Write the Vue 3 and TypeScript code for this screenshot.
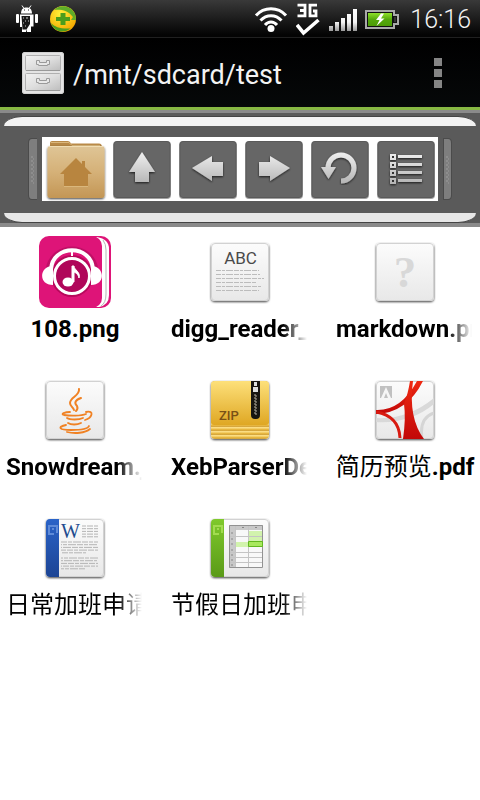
<script setup lang="ts">
type Tool = { id: string; label: string }
type FileEntry = { kind: string; name: string; long: boolean }
type Part = { text: string; cjk: boolean }

const path = '/mnt/sdcard/test'

const tools: Tool[] = [
  { id: 'home', label: 'Home' },
  { id: 'up', label: 'Up' },
  { id: 'back', label: 'Back' },
  { id: 'forward', label: 'Forward' },
  { id: 'refresh', label: 'Refresh' },
  { id: 'list', label: 'List' },
]

const files: FileEntry[] = [
  { kind: 'music', name: '108.png', long: false },
  { kind: 'text', name: 'digg_reader_', long: true },
  { kind: 'unknown', name: 'markdown.pn', long: true },
  { kind: 'java', name: 'Snowdream.j', long: true },
  { kind: 'zip', name: 'XebParserDe', long: true },
  { kind: 'pdf', name: '简历预览.pdf', long: false },
  { kind: 'word', name: '日常加班申请', long: true },
  { kind: 'sheet', name: '节假日加班申', long: true },
]

// Latin runs are bold, Chinese runs keep the regular weight
function parts(name: string): Part[] {
  return (name.match(/[\u4e00-\u9fff]+|[^\u4e00-\u9fff]+/g) ?? []).map((text) => ({
    text,
    cjk: /[\u4e00-\u9fff]/.test(text),
  }))
}

const rows4 = [0, 1, 2, 3]
const textRows = [34.5, 38.5, 42.5, 46.5, 50.5, 54.5]
const wordRows = [30, 32.7, 35.4, 38.1, 40.8, 46, 48.7, 51.4, 54.1, 56.8]
const wordTop = [14, 16.7, 19.4, 22.1, 24.8]
const teeth = [21, 24, 27, 30, 33, 36, 39]
const dots = [20, 24, 28, 32, 36, 40, 44]
</script>

<template>
  <main class="screen">
    <svg class="defs" width="0" height="0" aria-hidden="true">
      <defs>
        <linearGradient id="tile" x1="0" y1="0" x2="0" y2="1"><stop offset="0" stop-color="#fcfcfc" /><stop offset="1" stop-color="#e8e8e8" /></linearGradient>
        <linearGradient id="glyph" x1="0" y1="14" x2="0" y2="48" gradientUnits="userSpaceOnUse"><stop offset="0" stop-color="#f2f2f2" /><stop offset="1" stop-color="#b2b2b2" /></linearGradient>
        <linearGradient id="folder" x1="0" y1="0" x2="0" y2="1"><stop offset="0" stop-color="#dfc596" /><stop offset="0.5" stop-color="#d5b178" /><stop offset="1" stop-color="#c39655" /></linearGradient>
        <linearGradient id="gold" x1="0" y1="0" x2="0" y2="1"><stop offset="0" stop-color="#fde07a" /><stop offset="1" stop-color="#dfa723" /></linearGradient>
        <linearGradient id="layer" x1="0" y1="0" x2="0" y2="4" gradientUnits="userSpaceOnUse" spreadMethod="repeat"><stop offset="0" stop-color="#c48d1c" /><stop offset="0.4" stop-color="#ffe28a" /><stop offset="1" stop-color="#e0aa2c" /></linearGradient>
        <linearGradient id="green" x1="0" y1="0" x2="0" y2="1"><stop offset="0" stop-color="#7fc92c" /><stop offset="1" stop-color="#5a9a18" /></linearGradient>
        <linearGradient id="blue" x1="0" y1="0" x2="0" y2="1"><stop offset="0" stop-color="#2a63c8" /><stop offset="1" stop-color="#1c4494" /></linearGradient>
        <linearGradient id="red" x1="0" y1="0" x2="0" y2="1"><stop offset="0" stop-color="#f02a12" /><stop offset="1" stop-color="#c20808" /></linearGradient>
        <linearGradient id="bars" x1="0" y1="0" x2="0" y2="1"><stop offset="0" stop-color="#fff" /><stop offset="0.6" stop-color="#f4f4f4" /><stop offset="1" stop-color="#999" /></linearGradient>
        <linearGradient id="power" x1="0" y1="0" x2="0" y2="1"><stop offset="0" stop-color="#8ee02a" /><stop offset="0.5" stop-color="#55a80c" /><stop offset="1" stop-color="#4c9c06" /></linearGradient>
        <radialGradient id="ball" cx="0.4" cy="0.3" r="0.7"><stop offset="0" stop-color="#fff23a" /><stop offset="1" stop-color="#f5a800" /></radialGradient>
        <linearGradient id="drawer" x1="0" y1="0" x2="1" y2="1"><stop offset="0" stop-color="#f2f2f2" /><stop offset="0.5" stop-color="#dedede" /><stop offset="1" stop-color="#bdbdbd" /></linearGradient>
        <filter id="shade" x="-10%" y="-10%" width="120%" height="125%"><feDropShadow dx="0" dy="1" stdDeviation="0.8" flood-color="#000" flood-opacity="0.75" /></filter>
        <clipPath id="tileclip"><rect x="7" y="7" width="58" height="58" rx="4" /></clipPath>
      </defs>
    </svg>

    <header class="status">
      <div class="notices">
        <svg width="24" height="28" viewBox="0 0 24 28" aria-hidden="true">
          <path d="M6 8.500c0-4.500 2.500-6 5.500-6s5.500 1.500 5.500 6z" fill="#fff" /><path d="M7 .5l2 3M16 .5l-2 3" stroke="#fff" />
          <path d="M9 5h1M13 5h1" stroke="#222" />
          <rect x="1" y="9" width="3" height="9" rx="1" fill="#fff" /><rect x="20" y="9" width="3" height="9" rx="1" fill="#fff" />
          <path d="M5 9.500h13.500v12h-2.500V27h-4v-3l-1 3H7v-5H5z" fill="#fff" />
          <path d="M6.500 11h8.500v8l-3.500 5.500h-4z" fill="#181818" />
          <path d="M8 13h1M11 13h2M10 16h1M13 16h1M8 18h1M10 21h1" stroke="#ccc" />
        </svg>
        <svg width="28" height="28" viewBox="0 0 28 28" aria-hidden="true">
          <circle cx="14" cy="14" r="13" fill="url(#ball)" />
          <path d="M5 5C10-.5 21-.5 25.500 8q1.500 3 1.500 7L22 15l2-3C19 5 11 4 5 5z" fill="#5fae28" />
          <path d="M2 18c4 4 9 6 19.500 5.500C15 29 5 27 2 18z" fill="#4c9e1f" />
          <path d="M11.500 8h5v4h4.500v4h-4.500v4h-5v-4H7v-4h4.500z" fill="#4b9d1c" />
        </svg>
      </div>
      <div class="signals">
        <svg width="34" height="28" viewBox="0 0 34 28" fill="none" stroke="#fff" stroke-width="3" aria-hidden="true">
          <path d="M2 10.500C10 1.500 24 1.500 32 10.500M6.500 15.500c6-6.500 15-6.500 21 0M11 20c3.500-4 8.500-4 12 0" />
          <circle cx="17" cy="23.500" r="3.500" fill="#fff" stroke="none" />
        </svg>
        <svg class="net" width="24" height="34" viewBox="0 0 24 34" role="img" aria-label="3G">
          <path d="M1.500 3.200h7.500v10.600h-7.500M4 8.500h5M21 3.200h-7v10.600h6V9h-3" fill="none" stroke="#fff" stroke-width="2.800" />
          <path d="M1 23l6.500 8L22.500 18" fill="none" stroke="#fff" stroke-width="3.600" />
        </svg>
        <svg width="28" height="24" viewBox="0 0 28 24" fill="url(#bars)" aria-hidden="true">
          <path d="M0 19h4v5H0zM6 15h4v9H6zM12 11h4v13h-4zM18 7h4v17h-4zM24 2h4v22h-4z" />
        </svg>
        <svg width="34" height="20" viewBox="0 0 34 20" aria-hidden="true">
          <path d="M1 2h28v4h4v9h-4v4H1z" fill="#111" stroke="#aaa" stroke-width="2" />
          <rect x="3" y="4" width="24" height="13" fill="url(#power)" /><path d="M29 8h2v5h-2z" fill="#333" />
          <path d="M16 4.500L11 11h3.500l-3 6 8-7.500H16l3-5z" fill="#fff" />
        </svg>
        <time class="clock">16:16</time>
      </div>
    </header>

    <div class="title">
      <svg width="42" height="42" viewBox="0 0 42 42" aria-hidden="true">
        <rect width="42" height="42" rx="3" fill="#e4e4e4" />
        <rect x="0.500" y="0.500" width="41" height="41" rx="2.500" fill="none" stroke="#d2d2d2" />
        <g stroke="#b0b0b0"><rect x="3.500" y="3.500" width="35" height="15" rx="1" fill="url(#drawer)" /><rect x="3.500" y="21.500" width="35" height="17" rx="1" fill="url(#drawer)" /></g>
        <path d="M4 18.500h34M4 38.500h34" stroke="#999" />
        <g fill="#e8e8e8" stroke="#9a9a9a"><path d="M14.500 8.500h3v2h7v-2h3v4h-2v1h-9v-1h-2z" /><path d="M14.500 26.500h3v2h7v-2h3v4h-2v1h-9v-1h-2z" /></g>
      </svg>
      <h1 class="path">{{ path }}</h1>
      <button class="more" type="button" aria-label="More options"><i /><i /><i /></button>
    </div>

    <nav class="toolbar" aria-label="Navigation">
      <div class="rail rail-top" />
      <div class="bar">
        <svg width="10" height="64" viewBox="0 0 10 64" aria-hidden="true">
          <path d="M10 1H5Q1 1 1 6V58Q1 63 5 63h5z" fill="#4b4b4b" />
          <path d="M10 2H5Q2 2 2 6V58Q2 62 5 62h5z" fill="#7e7e7e" />
          <path v-for="y in dots" :key="y" :d="`M4 ${y}h2M6 ${y + 2}h1`" stroke="#9c9c9c" />
        </svg>
        <div class="tools">
          <button v-for="tool in tools" :key="tool.id" class="tool" type="button" :aria-label="tool.label">
            <svg width="66" height="64" viewBox="0 0 66 64" aria-hidden="true">
              <g v-if="tool.id === 'home'">
                <path d="M8 10V6q0-2 2-2h16q2 0 3 2.500h28q3 0 3 4z" fill="#b98a48" />
                <path d="M9 5.500h18l3 3h28" fill="none" stroke="#dab77c" />
                <rect x="5.500" y="9" width="57" height="52" rx="3" fill="url(#folder)" filter="url(#shade)" />
                <path d="M7 9.500h54" stroke="#f1deb4" />
                <path d="M34 21L18 37h4v12h24V37h4l-7-7v-6h-3v3z" fill="#b8853f" />
                <path d="M22 49.500h24" stroke="#dab77c" />
              </g>
              <g v-else>
                <rect x="5" y="4" width="58" height="58" rx="4" fill="#a0a0a0" />
                <rect x="6" y="4.500" width="56" height="56" rx="3" fill="#666" stroke="#5a5a5a" />
                <g fill="url(#glyph)" filter="url(#shade)">
                  <path v-if="tool.id === 'up'" d="M34 15l13 20h-6v10H27V35h-6z" />
                  <path v-if="tool.id === 'back'" d="M18 31l20-12v6h11v14H38v5z" />
                  <path v-if="tool.id === 'forward'" d="M50 31L30 19v6H19v14h11v5z" />
                  <template v-if="tool.id === 'refresh'">
                    <path d="M35 44a13 13 0 1 0-13-13" fill="none" stroke="url(#glyph)" stroke-width="5" />
                    <path d="M15 30h15l-7.500 12z" />
                  </template>
                  <template v-if="tool.id === 'list'">
                    <g v-for="r in rows4" :key="r">
                      <path :d="`M19 ${18 + r * 8}h4v4h-4z`" fill="none" stroke="url(#glyph)" stroke-width="2" />
                      <rect x="26" :y="18 + r * 8" width="24" height="3" />
                    </g>
                  </template>
                </g>
              </g>
            </svg>
          </button>
        </div>
        <svg width="10" height="64" viewBox="0 0 10 64" aria-hidden="true">
          <path d="M0 1h5q4 0 4 5v52q0 5-4 5H0z" fill="#4b4b4b" />
          <path d="M1 2h4q3 0 3 4v52q0 4-3 4H1z" fill="#7e7e7e" />
          <path v-for="y in dots" :key="y" :d="`M3 ${y}h2M5 ${y + 2}h1`" stroke="#9c9c9c" />
        </svg>
      </div>
      <div class="rail rail-bottom" />
    </nav>

    <ul class="files">
      <li v-for="file in files" :key="file.name">
        <button class="file" type="button">
          <svg width="72" height="72" viewBox="0 0 72 72" aria-hidden="true">
            <g v-if="file.kind === 'music'">
              <rect x="4" width="68" height="72" rx="10" fill="#de1478" />
              <path d="M58 1q12 2 12 12v46q0 10-10 12H50V1z" fill="#fff" />
              <path d="M64 4q3 4 3 10v44q0 9-5 12" fill="none" stroke="#b5b5b5" />
              <rect width="63" height="72" rx="10" fill="#de1478" />
              <path d="M9 34C13 6 53 6 57 34" fill="none" stroke="#c00f66" stroke-width="5" />
              <circle cx="33" cy="40" r="21" fill="#b8085c" />
              <circle cx="33" cy="40" r="17.500" fill="#b0065a" stroke="#fff" stroke-width="3" />
              <path d="M12 33C14 8 52 8 54 33" fill="none" stroke="#fff" stroke-width="4" />
              <path d="M14 30v19C-1 49 0 30 14 30zM52 30v19c15 0 14-19 0-19z" fill="#fff" />
              <path d="M33 15v5" stroke="#fff" stroke-width="2" />
              <ellipse cx="29" cy="46" rx="5.500" ry="4.500" fill="#fff" /><path d="M33 46V30h2c0 4 7 6 5 12-1-4-3-5-5-6v10z" fill="#fff" stroke="#fff" />
            </g>
            <g v-else>
              <rect x="7" y="7" width="58" height="58" rx="4" fill="url(#tile)" filter="url(#shade)" />
              <rect x="7.500" y="7.500" width="57" height="57" rx="3.500" fill="none" stroke="#d2d2d2" />
              <template v-if="file.kind === 'text'">
                <text x="36.500" y="28" class="abc" text-anchor="middle">ABC</text>
                <path v-for="(y, i) in textRows" :key="y" :d="`M12 ${y}h${[43, 44, 48, 40, 46, 43][i]}`" stroke="#bcbcbc" stroke-dasharray="5 1 3 1 7 1" />
              </template>
              <text v-if="file.kind === 'unknown'" x="36" y="51" class="mark" text-anchor="middle">?</text>
              <g v-if="file.kind === 'java'" fill="none" stroke="#f08224" stroke-linecap="round">
                <path d="M40 15c1 7-9 8-9 14 0 3 3 4 4 7M42 24c-6 2-7 5-4 8 1 2 0 4-1 5" stroke-width="2" />
                <path d="M31 38c-5 0-10 2-6 3 6 1 17 1 22-1M47 38c9-2 6 6-1 8M28 44c3 2 12 2 16 0M29 49c3 2 9 2 13 0M27 51c-9 2-7 5 5 5 9 0 17-1 18-4M28 58c8 2 18 1 23-3" stroke-width="1.800" />
              </g>
              <g v-if="file.kind === 'zip'" clip-path="url(#tileclip)">
                <rect x="7" y="7" width="58" height="58" fill="url(#layer)" />
                <rect x="7" y="7" width="58" height="44" rx="3" fill="url(#gold)" />
                <path d="M47 6h9v35q0 4-4 4h-1q-4 0-4-4z" fill="#181511" />
                <path d="M50 8h3v4h-3zM49 13h5v5h-5z" fill="#ddd" />
                <path v-for="y in teeth" :key="y" :d="`M50 ${y}h2M51 ${y + 1}h2`" stroke="#b5afa2" />
                <text x="15" y="46" class="zip">ZIP</text>
              </g>
              <g v-if="file.kind === 'pdf'" clip-path="url(#tileclip)">
                <path d="M7 44q31 2 58-20v6Q41 50 7 48z" fill="#d9d9d9" /><path d="M53 64q-3-20 12-25" fill="none" stroke="#d5d5d5" stroke-width="3" />
                <path d="M11 12h12v12H11z" fill="#c1c1c1" /><path d="M12 24l5-11 5 11h-3l-2-5-2 5z" fill="#f6f6f6" />
                <path d="M7 36q25 1 41-29h6Q38 39 7 40z" fill="url(#red)" />
                <path d="M7 38q23 4 24 26" fill="none" stroke="#d81a10" stroke-width="3" />
                <path d="M44 7q-5 37 11 58H34q3-21 1-35 4-10 6-23z" fill="url(#red)" />
              </g>
              <g v-if="file.kind === 'word'" clip-path="url(#tileclip)">
                <rect x="7" y="7" width="13" height="58" fill="url(#blue)" />
                <path d="M17 20h1v-6h-8v8h5M15 17h-2" fill="none" stroke="#5f8bd8" stroke-width="2" />
                <text x="22" y="26" class="dub">W</text>
                <path v-for="y in wordTop" :key="y" :d="`M43 ${y}h16`" stroke="#b4b4b4" stroke-dasharray="4 1 6 1" />
                <path v-for="(y, i) in wordRows" :key="y" :d="`M22 ${y}h${[37, 36, 37, 37, 25, 37, 36, 37, 37, 24][i]}`" stroke="#b4b4b4" :stroke-dashoffset="i * 5" stroke-dasharray="6 1 4 1 8 1" />
              </g>
              <g v-if="file.kind === 'sheet'" clip-path="url(#tileclip)">
                <rect x="7" y="7" width="13" height="58" fill="url(#green)" />
                <path d="M17 20h1v-6h-8v8h5M15 17h-2" fill="none" stroke="#a2dc50" stroke-width="2" />
                <path d="M25 13h34v43H25z" fill="#f8f8f8" /><path d="M25 13h34v5H31v38h-6z" fill="#c9c9c9" />
                <path d="M45 19h14v10H45zM32 30h13v5H32z" fill="#d2f3ad" />
                <path d="M25 24.500h34M25 40.500h34M25 45.500h34M25 50.500h34M31.500 13v43M44.500 13v43" stroke="#c4c4c4" />
                <path d="M25.500 13.500h33v42h-33z" fill="none" stroke="#929292" />
                <path d="M44.500 29.500h14v5h-14z" fill="#a8e85d" stroke="#62b81f" />
                <path d="M38 15.500h2M51 15.500h2M28 20v2M28 26v2M28 31v2M28 37v2M28 42v2M28 47v2M28 52v2" stroke="#888" />
              </g>
            </g>
          </svg>
          <span class="name" :class="{ long: file.long }"><span v-for="(p, i) in parts(file.name)" :key="i" :class="{ cjk: p.cjk }">{{ p.text }}</span></span>
        </button>
      </li>
    </ul>
  </main>
</template>

<style>
body {
  margin: 0;
  background: #fff;
}
</style>

<style scoped>
.screen {
  min-height: 100vh;
  background: #fff;
  font-family: Roboto, "Noto Sans CJK SC", sans-serif;
}
.defs {
  position: absolute;
}
svg {
  display: block;
  flex: none;
}
button {
  border: 0;
  padding: 0;
  background: none;
  color: inherit;
  font: inherit;
}
.status {
  display: flex;
  justify-content: space-between;
  align-items: center;
  box-sizing: border-box;
  height: 38px;
  padding: 0 9px 0 15px;
  background: linear-gradient(#393939, #040404 94%);
  border-bottom: 1px solid #202020;
}
.notices {
  display: flex;
  gap: 10px;
}
.signals {
  display: flex;
  align-items: center;
  gap: 8px;
}
.net {
  margin-right: 1px;
}
.clock {
  padding: 2px 0 0 3px;
  color: #f4f4f4;
  font-size: 25px;
  font-weight: 300;
  line-height: 32px;
}
.title {
  display: flex;
  align-items: center;
  box-sizing: border-box;
  height: 72px;
  padding: 0 32px 0 22px;
  gap: 9px;
  background: linear-gradient(#000, #060809);
  border-bottom: 3px solid #88b944;
}
.path {
  flex: 1;
  margin: 0;
  padding-top: 4px;
  color: #f3f3f3;
  font-size: 27px;
  font-weight: 400;
  line-height: 32px;
}
.more {
  display: grid;
  gap: 3px;
  padding: 4px 6px;
}
.more i {
  width: 8px;
  height: 8px;
  background: #858585;
}
.toolbar {
  border-top: 3px solid #8a8a8a;
  border-bottom: 4px solid #8a8a8a;
  padding: 3px 4px 0;
  background: #5a5a5a;
}
.rail {
  box-sizing: border-box;
  height: 10px;
}
.rail-top {
  border-top: 1px solid #444;
  border-radius: 18px 18px 0 0 / 10px 10px 0 0;
  background: #f2f2f2;
}
.rail-bottom {
  border-bottom: 1px solid #444;
  border-radius: 0 0 18px 18px / 0 0 10px 10px;
  background: #e7e7e7;
}
.bar {
  display: flex;
  justify-content: center;
  gap: 5px;
  padding: 11px 0 12px;
}
.tools {
  display: flex;
  background: #fff;
}
.files {
  display: grid;
  grid-template-columns: repeat(3, 1fr);
  gap: 31px 15px;
  margin: 0;
  padding: 9px 0;
  list-style: none;
}
.files li {
  min-width: 0;
}
.file {
  display: flex;
  flex-direction: column;
  align-items: center;
  width: 100%;
  gap: 7px;
  color: #000;
}
.name {
  display: flex;
  justify-content: center;
  width: calc(100% - 16px);
  height: 28px;
  font-size: 24px;
  font-weight: 700;
  line-height: 28px;
  white-space: nowrap;
}
.long {
  justify-content: flex-start;
  width: calc(100% - 14px);
  margin-left: -2px;
  overflow: hidden;
  mask-image: linear-gradient(to right, #000 calc(100% - 24px), transparent);
}
.cjk {
  font-weight: 400;
}
.abc {
  font: 17px Roboto, sans-serif;
  fill: #4a4a4a;
}
.mark {
  font: bold 45px "Liberation Serif", serif;
  fill: #d8d8d8;
}
.zip {
  font: 500 13px Roboto, sans-serif;
  fill: #795015;
}
.dub {
  font: 20px "Liberation Serif", serif;
  fill: #214b8f;
}
</style>
